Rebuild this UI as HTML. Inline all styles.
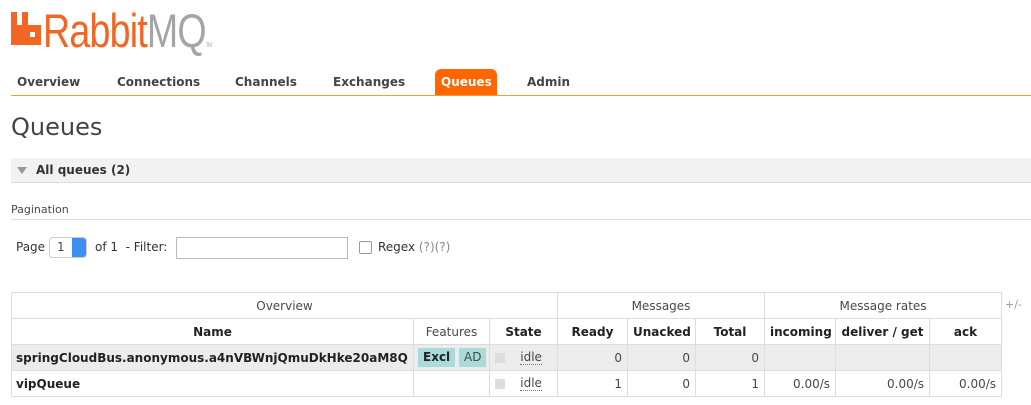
<!DOCTYPE html>
<html><head><style>
body{margin:0;width:1031px;height:405px;background:#fff;font-family:"DejaVu Sans","Liberation Sans",sans-serif;color:#484848;position:relative;overflow:hidden}
.a{position:absolute;white-space:nowrap}
.nav{font-weight:bold;font-size:12px;color:#444;top:75px}
table{position:absolute;left:11px;top:292px;width:990px;border-collapse:collapse;font-size:12px;table-layout:fixed}
td,th{border:1px solid #ddd;height:25px;padding:0 5px;white-space:nowrap;overflow:hidden}
th{font-weight:bold;color:#222}
.r{text-align:right}
.g td,.g th{background:#ececec}
.b{display:inline-block;background:#a8dbda;padding:3px 5px;line-height:13px}
.cb{display:inline-block;width:10px;height:10px;background:#ddd;vertical-align:middle}
.idle{border-bottom:1px dotted #777;line-height:13px;display:inline-block}
</style></head><body>
<svg class="a" style="left:11px;top:12px" width="31" height="33" viewBox="0 0 31 33"><path d="M0 0h6v13h5V0h6v13h13v20H0z" fill="#f26522"/><rect x="19" y="20" width="5" height="5" fill="#fff"/></svg>
<div class="a" style="left:43px;top:3px;font-family:'Liberation Sans',sans-serif;font-size:47px;letter-spacing:-1px;transform:scaleX(0.8);transform-origin:left top"><span style="color:#f26522">Rabbit</span><span style="color:#a3a5a6">MQ</span><span style="font-size:6px;color:#aaa">TM</span></div>
<div class="a nav" style="left:17px">Overview</div>
<div class="a nav" style="left:117px">Connections</div>
<div class="a nav" style="left:235px">Channels</div>
<div class="a nav" style="left:333px">Exchanges</div>
<div class="a" style="left:435px;top:69px;width:62px;height:27px;background:#f60;border-radius:6px 6px 0 0"></div>
<div class="a nav" style="left:441px;color:#fff">Queues</div>
<div class="a nav" style="left:527px">Admin</div>
<div class="a" style="left:11px;top:95px;width:1020px;height:1px;background:#f0a030"></div>
<div class="a" style="left:11px;top:113px;font-size:24px;color:#444">Queues</div>
<div class="a" style="left:11px;top:158px;width:1020px;height:24px;background:#f2f2f2;border-bottom:1px solid #ddd"></div>
<div class="a" style="left:17px;top:167px;width:0;height:0;border-left:5px solid transparent;border-right:5px solid transparent;border-top:7px solid #999"></div>
<div class="a" style="left:36px;top:163px;font-size:12px;font-weight:bold;color:#333">All queues (2)</div>
<div class="a" style="left:11px;top:203px;font-size:11px;color:#484848">Pagination</div>
<div class="a" style="left:11px;top:219px;width:1020px;height:1px;background:#ddd"></div>
<div class="a" style="left:16px;top:240px;font-size:12px;color:#333">Page</div>
<div class="a" style="left:49px;top:237px;width:36px;height:19px;border:1px solid #ccc;border-radius:4px;background:#fff"><span style="position:absolute;left:7px;top:2px;font-size:12px">1</span><span style="position:absolute;right:0;top:0;width:14px;height:19px;background:#3b8ff0;border-radius:0 3px 3px 0"></span></div>
<div class="a" style="left:95px;top:240px;font-size:12px;color:#333">of 1 &nbsp;- Filter:</div>
<div class="a" style="left:176px;top:237px;width:170px;height:20px;border:1px solid #bbb"></div>
<div class="a" style="left:359px;top:241px;width:11px;height:11px;border:1px solid #999;border-radius:2px"></div>
<div class="a" style="left:378px;top:240px;font-size:12px;color:#333">Regex <span style="color:#888">(?)(?)</span></div>
<div class="a" style="left:1005px;top:298px;font-size:11px;color:#999">+/-</div>
<table>
<colgroup><col style="width:402px"><col style="width:76px"><col style="width:68px"><col style="width:70px"><col style="width:68px"><col style="width:69px"><col style="width:71px"><col style="width:94px"><col style="width:72px"></colgroup>
<tr><td colspan="3" style="text-align:center">Overview</td><td colspan="3" style="text-align:center">Messages</td><td colspan="3" style="text-align:center">Message rates</td></tr>
<tr><th>Name</th><td style="text-align:center">Features</td><th>State</th><th>Ready</th><th>Unacked</th><th>Total</th><th>incoming</th><th>deliver / get</th><th>ack</th></tr>
<tr class="g"><th style="text-align:left;padding-left:4px">springCloudBus.anonymous.a4nVBWnjQmuDkHke20aM8Q</th><td style="padding:0 4px"><span class="b" style="font-weight:bold;color:#222">Excl</span> <span class="b">AD</span></td><td><span class="cb"></span> &nbsp; &nbsp;<span class="idle">idle</span></td><td class="r">0</td><td class="r">0</td><td class="r">0</td><td></td><td></td><td></td></tr>
<tr><th style="text-align:left;padding-left:4px">vipQueue</th><td></td><td><span class="cb"></span> &nbsp; &nbsp;<span class="idle">idle</span></td><td class="r">1</td><td class="r">0</td><td class="r">1</td><td class="r">0.00/s</td><td class="r">0.00/s</td><td class="r">0.00/s</td></tr>
</table>
</body></html>
